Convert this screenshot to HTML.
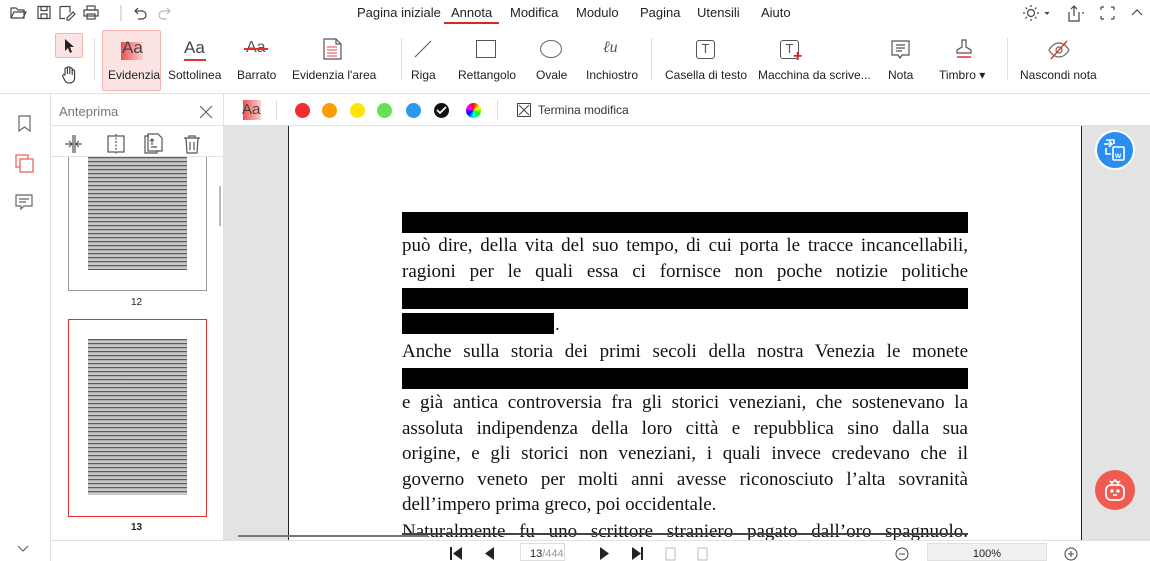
<!DOCTYPE html>
<html><head><meta charset="utf-8"><style>
*{margin:0;padding:0;box-sizing:border-box}
body{width:1150px;height:561px;overflow:hidden;background:#fff;font-family:"Liberation Sans",sans-serif;color:#222;position:relative;font-size:12px}
.a{position:absolute}
.menu{top:5px;font-size:13px;color:#222}
.lbl{position:absolute;top:68px;font-size:12px;color:#222;white-space:nowrap}
.sep{position:absolute;width:1px;background:#ddd}
.ln{position:absolute;left:402px;width:566px;font-family:"Liberation Serif",serif;font-size:19px;text-align:justify;text-align-last:justify;white-space:nowrap;color:#111;line-height:22px}
.red{position:absolute;background:#000}
.dot{position:absolute;top:103px;width:15px;height:15px;border-radius:50%}
.tt{position:absolute;left:19px;right:19px;background:repeating-linear-gradient(#333 0 1.3px,#fff 1.3px 2.6px,#777 2.6px 3.3px,#fff 3.3px 4px);opacity:.8}
</style></head><body>

<svg class="a" style="left:10px;top:5px" width="185" height="16" fill="none" stroke="#444" stroke-width="1.2">
<path d="M1 3h5l2 2h6v8H1z M1 13l3-6h12l-3 6"/>
<rect x="28" y="1.5" width="12" height="12"/><rect x="31" y="1.5" width="6" height="4"/><rect x="31" y="9" width="6" height="4.5"/>
<path d="M50 1.5h10v6 M50 1.5v12h5 M57 13l6-6 2 2-6 6h-2z"/>
<rect x="74" y="5" width="14" height="6"/><rect x="77" y="1" width="8" height="4"/><rect x="77" y="9" width="8" height="5"/>
<line x1="111" y1="0" x2="111" y2="16" stroke="#ccc"/>
<path d="M128 3l-3 3 3 3 M125 6h7a4 4 0 010 8h-4"/>
<path d="M157 3l3 3-3 3 M160 6h-7a4 4 0 000 8h4" stroke="#bbb"/>
</svg>
<div class="a menu" style="left:357px">Pagina iniziale</div>
<div class="a menu" style="left:451px">Annota</div>
<div class="a" style="left:444px;top:22px;width:55px;height:2px;background:#e02424"></div>
<div class="a menu" style="left:510px">Modifica</div>
<div class="a menu" style="left:576px">Modulo</div>
<div class="a menu" style="left:640px">Pagina</div>
<div class="a menu" style="left:697px">Utensili</div>
<div class="a menu" style="left:761px">Aiuto</div>
<svg class="a" style="left:1022px;top:4px" width="125" height="18" fill="none" stroke="#444" stroke-width="1.2">
<circle cx="9" cy="9" r="3.5"/><path d="M9 1v2M9 15v2M1 9h2M15 9h2M3.5 3.5l1.4 1.4M13.1 13.1l1.4 1.4M3.5 14.5l1.4-1.4M13.1 4.9l1.4-1.4"/>
<path d="M23 8l2 2 2-2" fill="#444"/>
<path d="M47 8v9h10V8 M52 12V2 M49 5l3-3 3 3"/><path d="M60 9h2"/>
<path d="M79 3v3 M79 3h3 M92 3h-3 M92 3v3 M79 15v-3 M79 15h3 M92 15h-3 M92 15v-3"/>
<path d="M110 11l5-5 5 5"/>
</svg>

<div class="a" style="left:55px;top:33px;width:28px;height:25px;background:#fde4e4;border:1px solid #f4b4b4;border-radius:2px"></div>
<svg class="a" style="left:63px;top:38px" width="12" height="16"><path d="M2 1v12l3-3 2 5 2-1-2-5h4z" fill="#222"/></svg>
<svg class="a" style="left:60px;top:66px" width="18" height="18" fill="none" stroke="#333" stroke-width="1.1"><path d="M5 9V3a1.2 1.2 0 012.4 0v5V2a1.2 1.2 0 012.4 0v6V3a1.2 1.2 0 012.4 0v6V5a1.2 1.2 0 012.4 0v7c0 3-2 5-5 5h-1c-2 0-3-1-4-3l-2-4a1.2 1.2 0 012-1z"/></svg>
<div class="sep" style="left:94px;top:38px;height:42px"></div>
<div class="a" style="left:102px;top:30px;width:59px;height:61px;background:#fde4e4;border:1px solid #f4b4b4;border-radius:2px"></div>
<div class="a" style="left:121px;top:42px;width:22px;height:18px;background:linear-gradient(90deg,#f05050,#fbd0d0)"></div>
<div class="a" style="left:122px;top:38px;font-size:17px;color:#444">Aa</div>
<div class="a" style="left:184px;top:38px;font-size:17px;color:#444">Aa</div>
<div class="a" style="left:184px;top:59px;width:22px;height:2px;background:#e03030"></div>
<div class="a" style="left:246px;top:39px;font-size:16px;color:#555">Aa</div>
<div class="a" style="left:244px;top:48px;width:24px;height:1.5px;background:#e03030"></div>
<svg class="a" style="left:322px;top:38px" width="22" height="22" fill="none" stroke="#555" stroke-width="1.2"><path d="M2 1h12l5 5v15H2z M14 1v5h5"/><path d="M5 9h10M5 12h10M5 15h10M5 18h10" stroke="#f08080" stroke-width="1.5"/></svg>
<div class="lbl" style="left:108px">Evidenzia</div>
<div class="lbl" style="left:168px">Sottolinea</div>
<div class="lbl" style="left:237px">Barrato</div>
<div class="lbl" style="left:292px">Evidenzia l'area</div>
<div class="sep" style="left:401px;top:38px;height:42px"></div>
<svg class="a" style="left:412px;top:38px" width="22" height="22"><line x1="3" y1="19" x2="19" y2="3" stroke="#666" stroke-width="1.2"/></svg>
<div class="lbl" style="left:411px">Riga</div>
<div class="a" style="left:476px;top:40px;width:20px;height:18px;border:1.3px solid #555"></div>
<div class="lbl" style="left:458px">Rettangolo</div>
<div class="a" style="left:540px;top:40px;width:22px;height:18px;border:1.3px solid #666;border-radius:50%"></div>
<div class="lbl" style="left:536px">Ovale</div>
<div class="a" style="left:603px;top:39px;font-family:'Liberation Serif',serif;font-style:italic;font-size:16px;color:#555">ℓu</div>
<div class="lbl" style="left:586px">Inchiostro</div>
<div class="sep" style="left:651px;top:38px;height:42px"></div>
<div class="a" style="left:696px;top:40px;width:19px;height:19px;border:1.3px solid #555;border-radius:3px;font-size:13px;text-align:center;line-height:16px;color:#555">T</div>
<div class="lbl" style="left:665px">Casella di testo</div>
<div class="a" style="left:780px;top:40px;width:19px;height:19px;border:1.3px solid #555;border-radius:3px;font-size:13px;text-align:center;line-height:16px;color:#555">T</div>
<div class="a" style="left:793px;top:48px;font-size:16px;color:#e02020;font-weight:bold">+</div>
<div class="lbl" style="left:758px">Macchina da scrive...</div>
<svg class="a" style="left:890px;top:39px" width="22" height="22" fill="none" stroke="#555" stroke-width="1.2"><path d="M2 2h17v14h-7l-2 3-2-3H2z M6 6h9M6 9h9M6 12h6"/></svg>
<div class="lbl" style="left:888px">Nota</div>
<svg class="a" style="left:953px;top:38px" width="22" height="22" fill="none" stroke="#555" stroke-width="1.2"><path d="M9 2h4v7l5 3v3H4v-3l5-3z"/><path d="M4 19h14" stroke="#e03030" stroke-width="1.5"/></svg>
<div class="lbl" style="left:939px">Timbro ▾</div>
<div class="sep" style="left:1007px;top:38px;height:42px"></div>
<svg class="a" style="left:1047px;top:39px" width="24" height="22" fill="none" stroke="#666" stroke-width="1.2"><path d="M2 11c3-5 6-7 10-7s7 2 10 7c-3 5-6 7-10 7s-7-2-10-7z"/><circle cx="12" cy="11" r="3"/><path d="M4 20L20 2" stroke="#e03030" stroke-width="1.4"/></svg>
<div class="lbl" style="left:1020px">Nascondi nota</div>
<div class="a" style="left:0;top:93px;width:1150px;height:1px;background:#e2e2e2"></div>

<div class="a" style="left:50px;top:94px;width:1px;height:467px;background:#e2e2e2"></div>
<svg class="a" style="left:16px;top:115px" width="18" height="18" fill="none" stroke="#666" stroke-width="1.2"><path d="M3 1h11v15l-5.5-4L3 16z"/></svg>
<svg class="a" style="left:15px;top:154px" width="20" height="20" fill="none" stroke="#f07070" stroke-width="1.4"><rect x="1" y="1" width="12" height="12"/><rect x="5" y="5" width="13" height="13" fill="#fff"/></svg>
<svg class="a" style="left:15px;top:194px" width="20" height="18" fill="none" stroke="#666" stroke-width="1.2"><path d="M1 1h16v11H9l-3 3v-3H1z M4 5h10M4 8h7"/></svg>
<svg class="a" style="left:17px;top:545px" width="12" height="8" fill="none" stroke="#666" stroke-width="1.2"><path d="M1 1l5 5 5-5"/></svg>

<div class="a" style="left:59px;top:104px;font-size:13px;color:#777">Anteprima</div>
<svg class="a" style="left:199px;top:105px" width="14" height="14" stroke="#666" stroke-width="1.2"><path d="M1 1l12 12M13 1L1 13"/></svg>
<div class="a" style="left:51px;top:125px;width:172px;height:1px;background:#e2e2e2"></div>
<svg class="a" style="left:63px;top:133px" width="150" height="22" fill="none" stroke="#555" stroke-width="1.2">
<path d="M2 11h7M6 8l3 3-3 3M19 11h-6M16 8l-3 3 3 3M10 2v18M12 2v18"/>
<rect x="45" y="3" width="16" height="16"/><path d="M53 1v20" stroke-dasharray="2 1.5"/>
<path d="M86 3h-4v17h12v-2 M85 1h10l4 4v13H85z M89 12v-6M87 8l2-2 2 2M88 14h6"/>
<path d="M121 5h16M126 5V3h6v2 M123 5l1 15h10l1-15 M127 9v8M131 9v8"/>
</svg>
<div class="a" style="left:51px;top:156px;width:172px;height:1px;background:#e2e2e2"></div>
<div class="a" style="left:223px;top:94px;width:1px;height:447px;background:#e2e2e2"></div>
<div class="a" style="left:68px;top:157px;width:139px;height:134px;border:1px solid #999;border-top:none;background:#fff">
<div class="tt" style="top:0;height:113px"></div>
</div>
<div class="a" style="left:131px;top:297px;font-size:10px">12</div>
<div class="a" style="left:219px;top:186px;width:2px;height:40px;background:#bbb"></div>
<div class="a" style="left:68px;top:319px;width:139px;height:198px;border:1px solid #e03030;background:#fff">
<div class="tt" style="top:19px;height:156px"></div>
</div>
<div class="a" style="left:131px;top:522px;font-size:10px;font-weight:bold">13</div>
<div class="a" style="left:51px;top:540px;width:172px;height:1px;background:#e2e2e2"></div>

<div class="a" style="left:243px;top:100px;width:18px;height:20px;background:linear-gradient(90deg,#f05050,#fbd0d0)"></div>
<div class="a" style="left:242px;top:101px;font-size:15px;color:#444">Aa</div>
<div class="sep" style="left:276px;top:100px;height:20px"></div>
<div class="dot" style="left:295px;background:#f02e2e"></div>
<div class="dot" style="left:322px;background:#ff9c00"></div>
<div class="dot" style="left:350px;background:#ffe600"></div>
<div class="dot" style="left:377px;background:#68e055"></div>
<div class="dot" style="left:406px;background:#2a9af0"></div>
<div class="dot" style="left:434px;background:#111"></div>
<svg class="a" style="left:436px;top:106px" width="11" height="9"><path d="M1 4l3 3 6-6" stroke="#fff" stroke-width="1.8" fill="none"/></svg>
<div class="dot" style="left:466px;background:conic-gradient(red,yellow,lime,cyan,blue,magenta,red)"></div>
<div class="sep" style="left:497px;top:100px;height:20px"></div>
<div class="a" style="left:517px;top:103px;width:14px;height:14px;border:1px solid #444"></div>
<svg class="a" style="left:517px;top:103px" width="14" height="14"><path d="M2 2l10 10M12 2L2 12" stroke="#444"/></svg>
<div class="a" style="left:538px;top:103px;font-size:12px;color:#333">Termina modifica</div>
<div class="a" style="left:224px;top:125px;width:926px;height:1px;background:#e2e2e2"></div>

<div class="a" style="left:224px;top:126px;width:926px;height:414px;background:#e3e3e3"></div>
<div class="a" style="left:288px;top:126px;width:794px;height:414px;background:#fff;border-left:1.5px solid #222;border-right:1.5px solid #222"></div>
<div class="red" style="left:402px;top:212px;width:566px;height:21px"></div>
<div class="ln" style="top:235px">può dire, della vita del suo tempo, di cui porta le tracce incancellabili,</div>
<div class="ln" style="top:261px">ragioni per le quali essa ci fornisce non poche notizie politiche</div>
<div class="red" style="left:402px;top:288px;width:566px;height:21px"></div>
<div class="red" style="left:402px;top:313px;width:152px;height:21px"></div>
<div class="a" style="left:555px;top:314px;font-family:'Liberation Serif',serif;font-size:19px">.</div>
<div class="ln" style="top:341px">Anche sulla storia dei primi secoli della nostra Venezia le monete</div>
<div class="red" style="left:402px;top:368px;width:566px;height:21px"></div>
<div class="ln" style="top:392px">e già antica controversia fra gli storici veneziani, che sostenevano la</div>
<div class="ln" style="top:418px">assoluta indipendenza della loro città e repubblica sino dalla sua</div>
<div class="ln" style="top:443px">origine, e gli storici non veneziani, i quali invece credevano che il</div>
<div class="ln" style="top:469px">governo veneto per molti anni avesse riconosciuto l’alta sovranità</div>
<div class="ln" style="top:494px;text-align-last:left">dell’impero prima greco, poi occidentale.</div>
<div class="ln" style="top:521px">Naturalmente fu uno scrittore straniero pagato dall’oro spagnuolo.</div>
<div class="a" style="left:402px;top:533px;width:566px;height:2px;background:#444"></div>
<div class="a" style="left:238px;top:535px;width:190px;height:2px;background:#777"></div>

<div class="a" style="left:1095px;top:130px;width:40px;height:40px;border-radius:50%;background:#2a8ef0;border:2px solid #fff"></div>
<svg class="a" style="left:1101px;top:136px" width="28" height="28" fill="none" stroke="#fff" stroke-width="1.6"><path d="M3 8h8M8 5l3 3-3 3M5 4h8v4M5 12v6h5"/><rect x="12" y="11" width="11" height="13" rx="1"/><text x="14" y="22" font-size="8" fill="#fff" stroke="none" font-family="Liberation Sans" font-weight="bold">w</text></svg>
<div class="a" style="left:1095px;top:470px;width:40px;height:40px;border-radius:50%;background:#f05a50"></div>
<svg class="a" style="left:1103px;top:476px" width="24" height="28" fill="none" stroke="#fff" stroke-width="1.8"><path d="M7 5l2 2 3-3 3 3 2-2"/><rect x="3" y="9" width="18" height="15" rx="5"/><circle cx="9" cy="15" r="0.8" fill="#fff"/><circle cx="15" cy="15" r="0.8" fill="#fff"/><path d="M10 19h4"/></svg>

<div class="a" style="left:224px;top:540px;width:926px;height:21px;background:#fff;border-top:1px solid #e2e2e2"></div>
<svg class="a" style="left:448px;top:546px" width="270" height="15" fill="#222">
<rect x="2" y="1" width="2" height="13"/><path d="M14 1v13l-9-6.5z"/><path d="M46 1v13l-9-6.5z"/>
<path d="M152 1v13l9-6.5z"/><path d="M184 1v13l9-6.5z"/><rect x="193" y="1" width="2" height="13"/>
<g fill="none" stroke="#bbb"><rect x="218" y="2" width="9" height="12"/><rect x="250" y="2" width="9" height="12"/></g>
</svg>
<div class="a" style="left:520px;top:543px;width:45px;height:18px;border:1px solid #ddd;font-size:11px;padding:4px 0 0 9px">13<span style="color:#999">/444</span></div>
<svg class="a" style="left:895px;top:547px" width="14" height="14" fill="none" stroke="#444"><circle cx="7" cy="7" r="6"/><path d="M4 7h6"/></svg>
<div class="a" style="left:927px;top:543px;width:120px;height:18px;background:#f0f0f0;border:1px solid #e0e0e0;font-size:11px;text-align:center;padding-top:4px">100%</div>
<svg class="a" style="left:1064px;top:547px" width="14" height="14" fill="none" stroke="#444"><circle cx="7" cy="7" r="6"/><path d="M4 7h6M7 4v6"/></svg>
</body></html>
